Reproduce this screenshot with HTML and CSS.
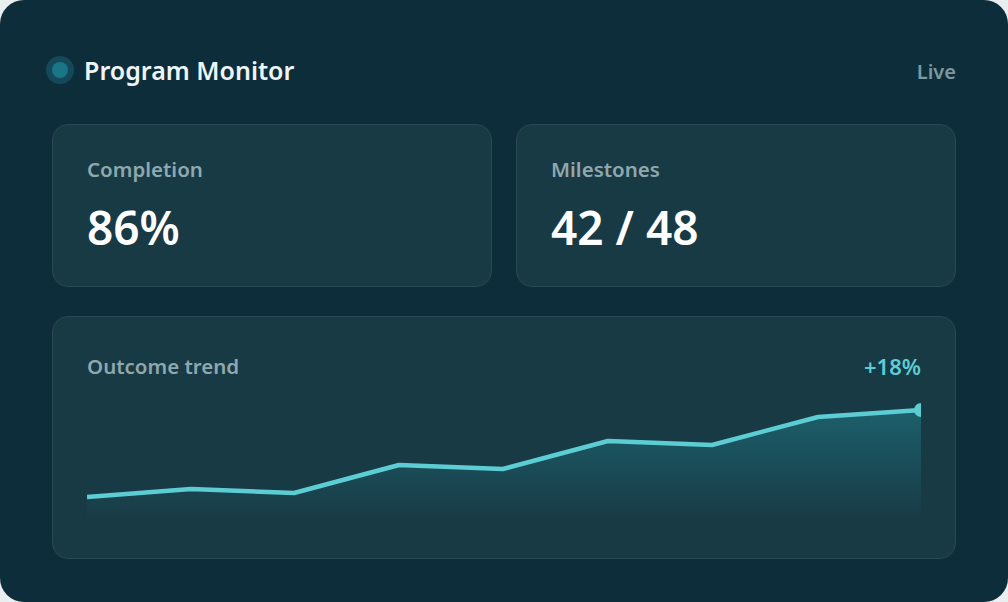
FILE: index.html
```html
<!DOCTYPE html>
<html lang="en">
<head>
    <meta charset="UTF-8">
    <title>Program Monitor</title>
    <link rel="stylesheet" href="styles.css">
</head>
<body>
    <div class="monitor">
        <!-- Header -->
        <header class="monitor-header">
            <div class="title">
                <span class="dot"></span>
                <h1>Program Monitor</h1>
            </div>
            <span class="status">Live</span>
        </header>

        <!-- Stats -->
        <div class="stats">
            <div class="card">
                <div class="label">Completion</div>
                <div class="value">86%</div>
            </div>
            <div class="card">
                <div class="label">Milestones</div>
                <div class="value">42 / 48</div>
            </div>
        </div>

        <!-- Trend -->
        <div class="card trend">
            <div class="trend-head">
                <span class="label">Outcome trend</span>
                <span class="delta">+18%</span>
            </div>
            <svg class="chart" viewBox="0 0 834 125" preserveAspectRatio="none">
                <defs>
                    <linearGradient id="fill" x1="0" y1="0" x2="0" y2="1">
                        <stop offset="0" stop-color="#1d6c78" stop-opacity="0.75"/>
                        <stop offset="1" stop-color="#1d6c78" stop-opacity="0"/>
                    </linearGradient>
                    <clipPath id="plot">
                        <rect x="0" y="-10" width="834" height="140"/>
                    </clipPath>
                </defs>
                <g clip-path="url(#plot)">
                    <path d="M0 102 L104 94 L207 98 L312 70 L416 74 L521 46 L625 50 L731 22 L834 15 L834 125 L0 125 Z" fill="url(#fill)"/>
                    <path d="M0 102 L104 94 L207 98 L312 70 L416 74 L521 46 L625 50 L731 22 L834 15" fill="none" stroke="#5ccdd3" stroke-width="4.5" stroke-linejoin="round"/>
                    <circle cx="834" cy="15" r="7" fill="#5ccdd3"/>
                </g>
            </svg>
        </div>
    </div>
</body>
</html>
```

FILE: styles.css
```css
body {
    margin: 0;
    padding: 0;
    background: #e9eef0;
    font-family: 'Noto Sans', 'Open Sans', sans-serif;
}

.monitor {
    width: 1008px;
    height: 602px;
    box-sizing: border-box;
    background: #0d2d3a;
    border-radius: 24px;
    padding: 47px 52px 42px;
    display: flex;
    flex-direction: column;
}

/* Header */
.monitor-header {
    display: flex;
    justify-content: space-between;
    align-items: center;
    height: 46px;
}

.title {
    display: flex;
    align-items: center;
    gap: 16px;
}

.dot {
    width: 16px;
    height: 16px;
    border-radius: 50%;
    background: #197687;
    box-shadow: 0 0 0 6px #15495a;
}

.title h1 {
    margin: 0;
    font-size: 25px;
    font-weight: 600;
    color: #eef5f6;
}

.status {
    font-size: 20px;
    font-weight: 600;
    color: #7b97a0;
    padding-top: 3px;
}

/* Cards */
.stats {
    display: grid;
    grid-template-columns: 1fr 1fr;
    gap: 24px;
    margin-top: 31px;
}

.card {
    background: #183a45;
    border: 1px solid #284a55;
    border-radius: 16px;
    padding: 30px 34px;
    height: 163px;
    box-sizing: border-box;
}

.label {
    font-size: 20.5px;
    font-weight: 600;
    color: #8fa8ae;
}

.value {
    margin-top: 15px;
    font-size: 46px;
    font-weight: 600;
    color: #ffffff;
    line-height: 1.3;
}

/* Trend */
.trend {
    margin-top: 29px;
    height: 243px;
    padding-top: 34px;
    padding-bottom: 0;
    display: flex;
    flex-direction: column;
}

.trend-head {
    display: flex;
    justify-content: space-between;
    align-items: center;
}

.delta {
    font-size: 22px;
    font-weight: 600;
    color: #5ccdd3;
}

.chart {
    display: block;
    width: 834px;
    height: 125px;
    margin-top: 14px;
    overflow: visible;
}
```
